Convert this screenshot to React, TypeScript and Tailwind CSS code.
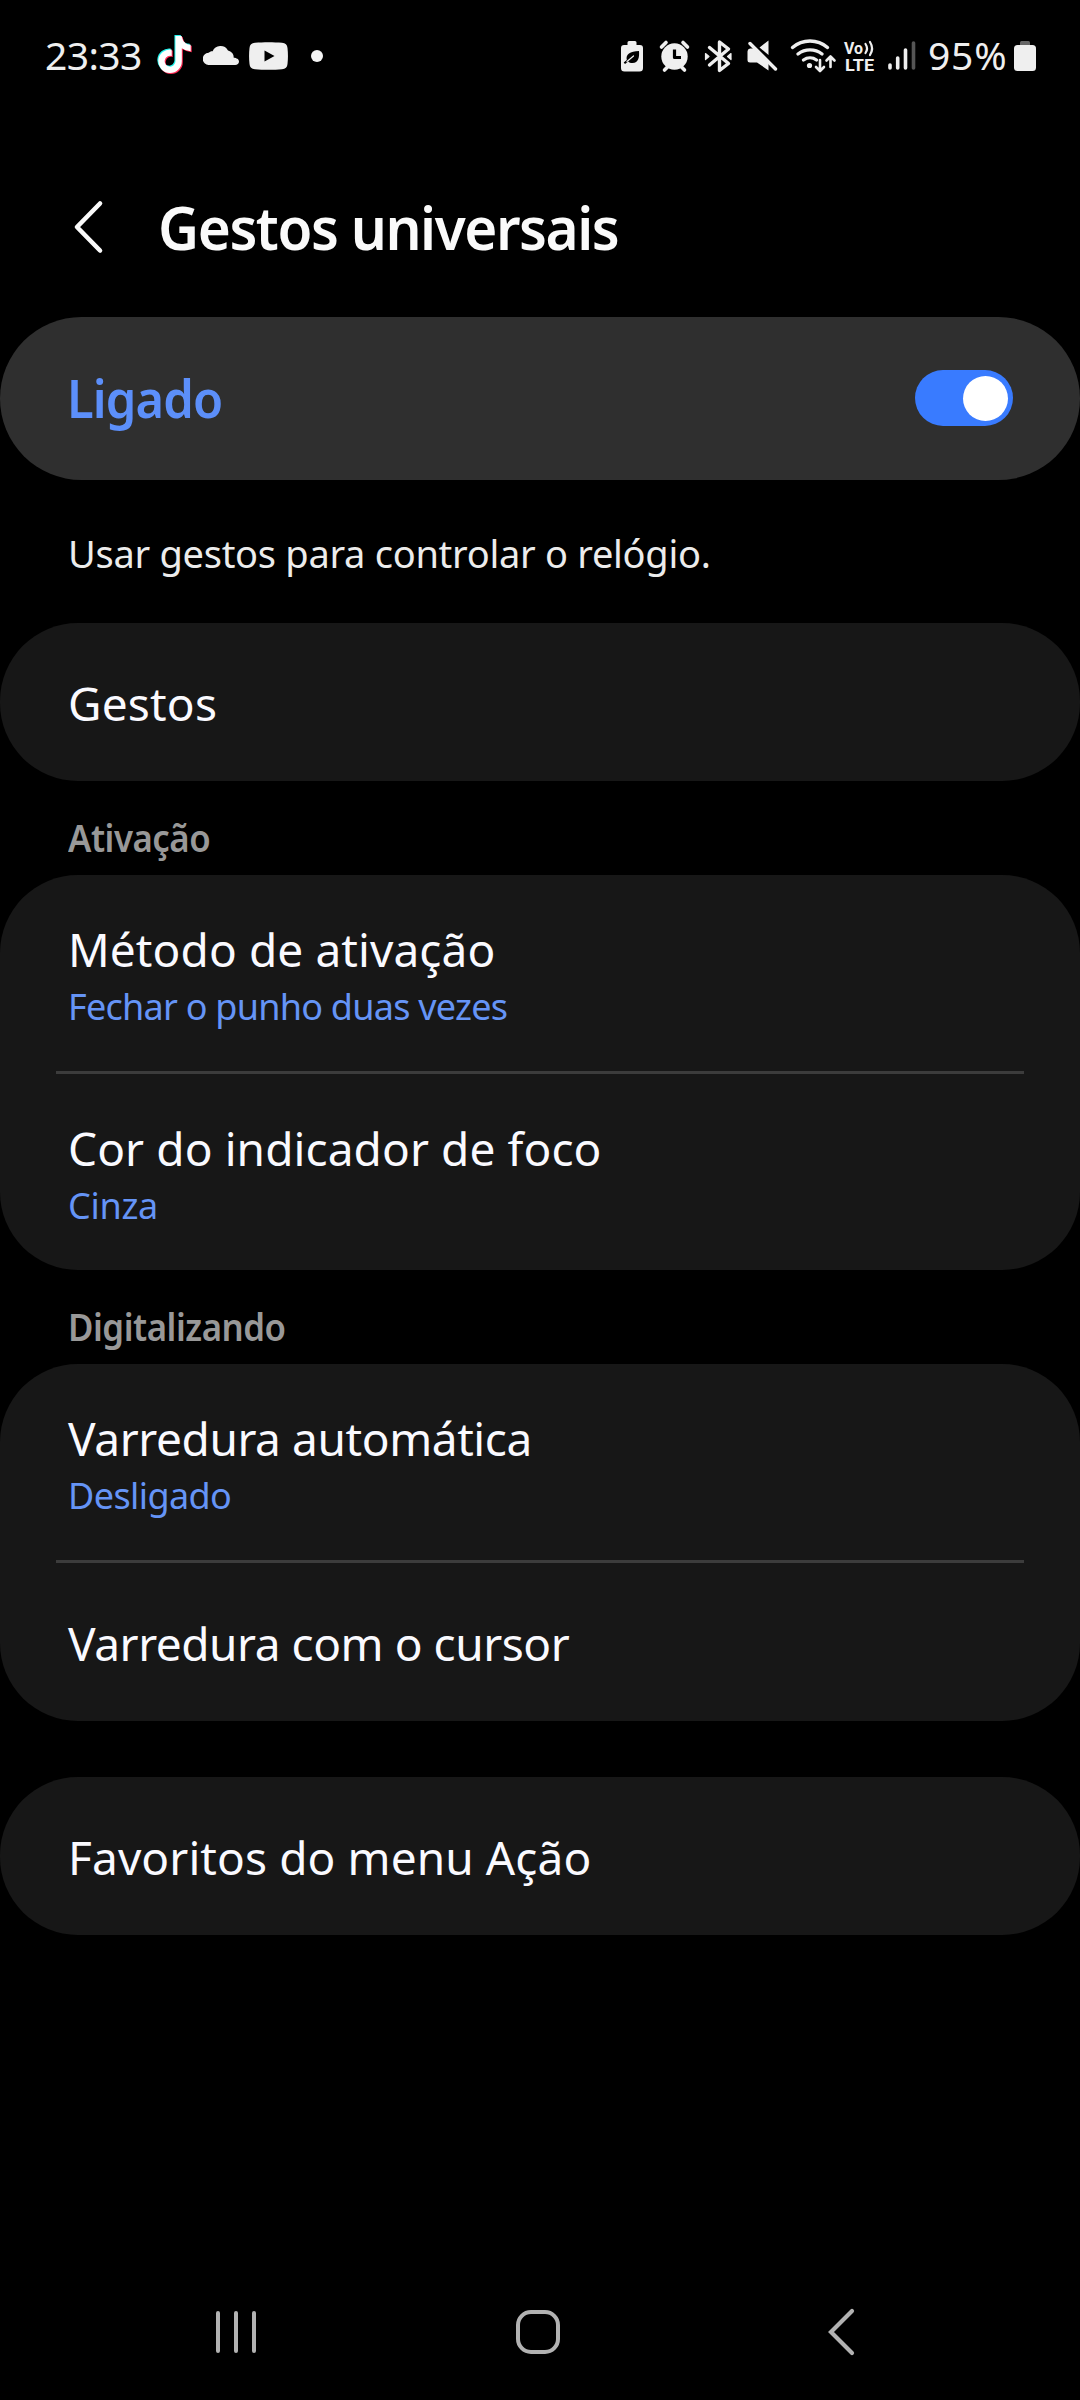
import type { ReactNode } from "react";
import { FaTiktok } from "react-icons/fa6";

interface RowProps {
  title: string;
  value?: string;
  className: string;
  titleClass?: string;
  valueClass?: string;
}

function Row({ title, value, className, titleClass = "", valueClass = "" }: RowProps) {
  return (
    <div className={`flex flex-col px-[68px] ${className}`}>
      <span className={`text-[46px] leading-[60px] text-[#fafaff] ${titleClass}`}>{title}</span>
      {value && (
        <span className={`mt-[5px] text-[36px] leading-[46px] text-[#6594f6] ${valueClass}`}>{value}</span>
      )}
    </div>
  );
}

function Card({ children, className = "" }: { children: ReactNode; className?: string }) {
  return <section className={`rounded-[78px] bg-[#171717] ${className}`}>{children}</section>;
}

function Divider() {
  return <div className="mx-14 h-[3px] bg-[#3c3c3c]" />;
}

function SectionLabel({ children }: { children: ReactNode }) {
  return (
    <div className="mt-[33px] mb-[13px] px-[68px]">
      <h2 className="origin-left scale-x-[0.94] text-[37px] leading-[48px] font-semibold tracking-[-0.5px] text-[#989898]">
        {children}
      </h2>
    </div>
  );
}

function NotificationIcons() {
  return (
    <>
      {/* TikTok, cyan and red shadows behind the white note */}
      <span className="relative ml-[15px] h-[42px] w-[35px]">
        <FaTiktok className="absolute top-[1px] left-[-1px] size-[37px] text-[#25f4ee]" />
        <FaTiktok className="absolute top-[3px] left-[1px] size-[37px] text-[#fe2c55]" />
        <FaTiktok className="absolute top-[2px] left-0 size-[37px] text-white" />
      </span>
      <svg className="ml-[12px]" width="36" height="20" viewBox="0 0 36 20" fill="#efefef">
        <path d="M6 20a6 6 0 0 1-.4-12.2C6.800 6.400 8.300 6 9.600 6.200A8.600 8.600 0 0 1 25 5.400a7 7 0 0 1 5.700 7.400C33.500 13 36 14.200 36 16.600 36 18.800 34.300 20 32.200 20Z" />
      </svg>
      <svg className="mt-[2px] ml-[10px]" width="39" height="28" viewBox="0 0 39 28">
        <path
          d="M6 .7C14 0 25 0 33 .7c3.500.3 5.200 2 5.500 5.300.6 5.500.6 10.500 0 16-.3 3.300-2 5-5.500 5.300-8 .7-19 .7-27 0C2.500 27 .8 25.300.5 22c-.6-5.500-.6-10.500 0-16C.8 2.700 2.500 1 6 .7Z"
          fill="#efefef"
        />
        <path d="M15.500 8.500v11l10-5.500Z" fill="#000" />
      </svg>
      <span className="mt-[2px] ml-[23px] size-[12px] rounded-full bg-[#f4f4f4]" />
    </>
  );
}

function SystemIcons() {
  return (
    <svg className="mt-[8px] mr-[1px]" width="306" height="46" viewBox="0 -3 306 46" fill="none" stroke="#efefef" strokeLinecap="round" strokeLinejoin="round">
      {/* battery saver */}
      <path d="M6.500 6V3.500a1.500 1.500 0 0 1 1.500-1.500h6a1.500 1.500 0 0 1 1.500 1.500V6H19a3 3 0 0 1 3 3v20a3.500 3.500 0 0 1-3.500 3.500h-15A3.500 3.500 0 0 1 0 29V9a3 3 0 0 1 3-3Z" fill="#efefef" stroke="none" />
      <path d="M18 12c.5 6-.5 12-6.500 12-2 0-3.300-.5-4.200-1.500L4 25l-1.300-1.500 3.100-2.400C4.500 15 9 12.500 18 12Z" fill="#000" stroke="none" />
      <path d="M6 22.500 12.500 17" stroke="#efefef" strokeWidth="1.200" />
      {/* alarm */}
      <circle cx="53.500" cy="17.500" r="13.200" fill="#efefef" stroke="none" />
      <path d="M53.500 10.500v8h6.500" stroke="#000" strokeWidth="3.200" strokeLinecap="butt" />
      <path d="m40.500 8 4.500-4.500M66.500 8 62 3.500M43.500 31l3-3M63.500 31l-3-3" strokeWidth="3.600" />
      {/* bluetooth */}
      <path d="m88.500 8.500 19 16-9 7V3l9 7-19 16" strokeWidth="3.400" />
      <path d="m84.500 14.500 3.500 3-3.500 3ZM110 14.500l-3.500 3 3.500 3Z" fill="#efefef" strokeWidth="1.200" />
      {/* muted speaker */}
      <path d="M126.500 12.500a3 3 0 0 1 2.500-3h5L147.500 22v9.500L136 23.500h-7a2.500 2.500 0 0 1-2.500-2.500ZM138.500 8.500l9-7v14.500Z" fill="#efefef" stroke="none" />
      <path d="m129 4.500 25.500 25.500" strokeWidth="3.400" />
      {/* wifi with traffic arrows */}
      <path d="M171.500 8.500a27 27 0 0 1 35 0M177 15a19.500 19.500 0 0 1 24 0M182.500 21a11 11 0 0 1 13 0" strokeWidth="3.400" />
      <circle cx="188.500" cy="26.500" r="2.600" fill="#efefef" stroke="none" />
      <path d="M199 21v10.500M195 28l4 4 4-4M209.500 28V18M205.500 21.500l4-4 4 4" strokeWidth="2.600" />
      {/* VoLTE */}
      <g fill="#efefef" stroke="none" fontFamily="Roboto, sans-serif" fontWeight="700">
        <text x="223" y="14.500" fontSize="16" textLength="19" lengthAdjust="spacingAndGlyphs">Vo</text>
        <text x="224" y="32" fontSize="17" textLength="29" lengthAdjust="spacingAndGlyphs">LTE</text>
      </g>
      <path d="M244.500 5a8 8 0 0 1 0 9M249 3a12 12 0 0 1 0 13" strokeWidth="2.200" />
      {/* signal bars */}
      <path d="M269 26v3M276.700 19v10M284.500 11v18" strokeWidth="3.600" />
      <path d="M292.500 4v25" stroke="#555" strokeWidth="3.600" />
    </svg>
  );
}

export default function App() {
  return (
    <div className="flex h-[2400px] w-[1080px] flex-col bg-black font-['Noto_Sans',sans-serif]">
      {/* Status bar */}
      <header className="flex h-[110px] items-center pr-[44px] pl-[45px] text-[39px] leading-[50px] text-[#efefef]">
        <span className="w-[96px] tracking-[-0.6px]">23:33</span>
        <NotificationIcons />
        <div className="ml-auto flex items-center">
          <SystemIcons />
          <span className="w-[82px] tracking-[0.8px]">95%</span>
          <svg className="mt-[2px] ml-[4px]" width="22" height="32" viewBox="0 0 22 32">
            <path d="M6 7V2.500A1.500 1.500 0 0 1 7.500 1h7A1.500 1.500 0 0 1 16 2.500V7Z" fill="#666" />
            <rect y="5" width="22" height="26" rx="3.500" fill="#efefef" />
          </svg>
        </div>
      </header>

      {/* Title bar */}
      <div className="flex h-[207px] items-center pl-[73px]">
        <svg className="mt-[26px]" width="32" height="54" viewBox="0 0 32 54" fill="none">
          <path d="M27 3.500 4 27l23 23.500" stroke="#fafafa" strokeWidth="4.600" strokeLinecap="round" strokeLinejoin="round" />
        </svg>
        <h1 className="mt-[26px] ml-[53px] origin-left scale-x-[0.96] text-[59px] leading-[76px] font-semibold tracking-[-1.500px] text-[#fafafa]">
          Gestos universais
        </h1>
      </div>

      <main className="flex flex-col">
        {/* Main switch */}
        <section className="flex h-[163px] items-center justify-between rounded-[81.500px] bg-[#2f2f2f] pr-[67px] pl-[67px]">
          <span className="mb-[2px] origin-left scale-x-[0.94] text-[52px] leading-[66px] font-semibold tracking-[-0.900px] text-[#5c8ffa]">
            Ligado
          </span>
          <div className="mb-[1px] flex h-[56px] w-[98px] items-center justify-end rounded-full bg-[#397bff] pr-[5px]">
            <span className="size-[45px] rounded-full bg-white" />
          </div>
        </section>

        <p className="mt-[48px] px-[68px] text-[38px] leading-[50px] tracking-[-0.28px] text-[#ececec]">
          Usar gestos para controlar o relógio.
        </p>

        <Card className="mt-[45px]">
          <Row title="Gestos" className="h-[158px] pt-[50px]" titleClass="tracking-[0.2px]" />
        </Card>

        <SectionLabel>Ativação</SectionLabel>
        <Card>
          <Row
            title="Método de ativação"
            value="Fechar o punho duas vezes"
            className="h-[196px] pt-[44px]"
            titleClass="tracking-[0.1px]"
            valueClass="tracking-[-0.75px]"
          />
          <Divider />
          <Row
            title="Cor do indicador de foco"
            value="Cinza"
            className="h-[196px] pt-[44px]"
            titleClass="tracking-[0.1px]"
            valueClass="tracking-[-0.3px]"
          />
        </Card>

        <SectionLabel>Digitalizando</SectionLabel>
        <Card>
          <Row
            title="Varredura automática"
            value="Desligado"
            className="h-[196px] pt-[44px]"
            titleClass="tracking-[-0.4px]"
            valueClass="tracking-[-0.6px]"
          />
          <Divider />
          <Row title="Varredura com o cursor" className="h-[158px] pt-[50px]" titleClass="tracking-[-0.45px]" />
        </Card>

        <Card className="mt-[56px]">
          <Row title="Favoritos do menu Ação" className="h-[158px] pt-[50px]" titleClass="tracking-[0.1px]" />
        </Card>
      </main>

      {/* Navigation bar */}
      <nav className="mt-auto flex h-[136px] items-center justify-between pr-[224px] pl-[214px]">
        <svg width="44" height="48" viewBox="0 0 44 48" fill="none" stroke="#b2b2b2" strokeWidth="4" strokeLinecap="round">
          <path d="M4 5v38M22 5v38M40 5v38" />
        </svg>
        <svg className="mr-[8px]" width="48" height="48" viewBox="0 0 48 48" fill="none" stroke="#b2b2b2" strokeWidth="4">
          <rect x="4" y="4" width="40" height="40" rx="13" />
        </svg>
        <svg width="30" height="50" viewBox="0 0 30 50" fill="none" stroke="#b2b2b2" strokeWidth="4.200" strokeLinecap="round">
          <path d="M26 4 5 25l21 21" />
        </svg>
      </nav>
    </div>
  );
}
